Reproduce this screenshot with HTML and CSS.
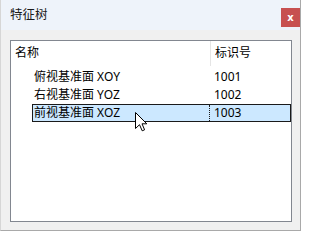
FILE: index.html
```html
<!DOCTYPE html>
<html lang="zh">
<head>
<meta charset="utf-8">
<link rel="stylesheet" href="styles.css">
</head>
<body>
<div class="window">
  <div class="titlebar">
    <span class="title">特征树</span>
    <button class="close" aria-label="关闭">x</button>
  </div>
  <div class="content">
    <div class="listbox">
      <div class="header">
        <div class="hcell hname">名称</div>
        <div class="hcell hid">标识号</div>
      </div>
      <div class="rows">
        <div class="row"><div class="cell cname">俯视基准面 XOY</div><div class="cell cid">1001</div></div>
        <div class="row"><div class="cell cname">右视基准面 YOZ</div><div class="cell cid">1002</div></div>
        <div class="row selected"><div class="cell cname">前视基准面 XOZ</div><div class="cell cid">1003</div></div>
      </div>
    </div>
  </div>
</div>
<svg class="cursor" width="13" height="20" viewBox="0 0 13 20">
  <path d="M0.5 0.5 L0.5 16.5 L4.5 12.7 L7.2 18.8 L9.6 17.8 L7 11.8 L11.8 11.8 Z" fill="#fff" stroke="#000" stroke-width="1" stroke-linejoin="miter"/>
</svg>
</body>
</html>
```
FILE: styles.css
```css
html, body {
  margin: 0;
  padding: 0;
  background: #ffffff;
}
body {
  width: 302px;
  height: 232px;
  position: relative;
  overflow: hidden;
  font-family: "Noto Sans", "Noto Sans CJK SC", sans-serif;
  font-size: 12px;
  color: #000;
}
.window {
  box-sizing: border-box;
  width: 301px;
  height: 231px;
  background: #f0f0f0;
  border-left: 1px solid #d6d6d6;
  border-right: 1px solid #a9a9a9;
  border-bottom: 1px solid #a9a9a9;
  display: flex;
  flex-direction: column;
}
.titlebar {
  height: 30px;
  background: #eef3fa;
  display: flex;
  align-items: flex-start;
  justify-content: space-between;
  flex: none;
}
.title {
  margin-left: 9px;
  margin-top: 6px;
  font-size: 12.5px;
  line-height: 18px;
  color: #1a1a1a;
}
.close {
  width: 19px;
  height: 19px;
  margin-top: 8px;
  padding: 0;
  border: none;
  background: #c75050;
  color: #fff;
  font-family: "DejaVu Sans", sans-serif;
  font-weight: bold;
  font-size: 10px;
  line-height: 17px;
  text-align: center;
}
.content {
  padding: 10px 0 0 9px;
}
.listbox {
  box-sizing: border-box;
  width: 282px;
  height: 182px;
  background: #fff;
  border: 1px solid #828790;
}
.header {
  display: flex;
  height: 25px;
}
.hcell {
  line-height: 23px;
  padding-left: 4px;
  box-sizing: border-box;
  color: #000;
}
.hname {
  width: 200px;
  border-right: 1px solid #e5e5e5;
}
.hid {
  flex: 1;
}
.rows {
  margin-top: 2px;
  padding-left: 21px;
  display: flex;
  flex-direction: column;
}
.row {
  box-sizing: border-box;
  height: 18px;
  display: flex;
  border: 1px solid transparent;
}
.cell {
  line-height: 16px;
  box-sizing: border-box;
  white-space: nowrap;
}
.cname {
  width: 177px;
  padding-left: 1px;
  border-right: 1px dotted transparent;
}
.cid {
  flex: 1;
  padding-left: 4px;
}
.row.selected {
  background: #cce8ff;
  border-color: #1a1a1a;
}
.row.selected .cname {
  border-right-color: #1a1a1a;
}
.cursor {
  position: absolute;
  left: 135px;
  top: 112px;
}
```
